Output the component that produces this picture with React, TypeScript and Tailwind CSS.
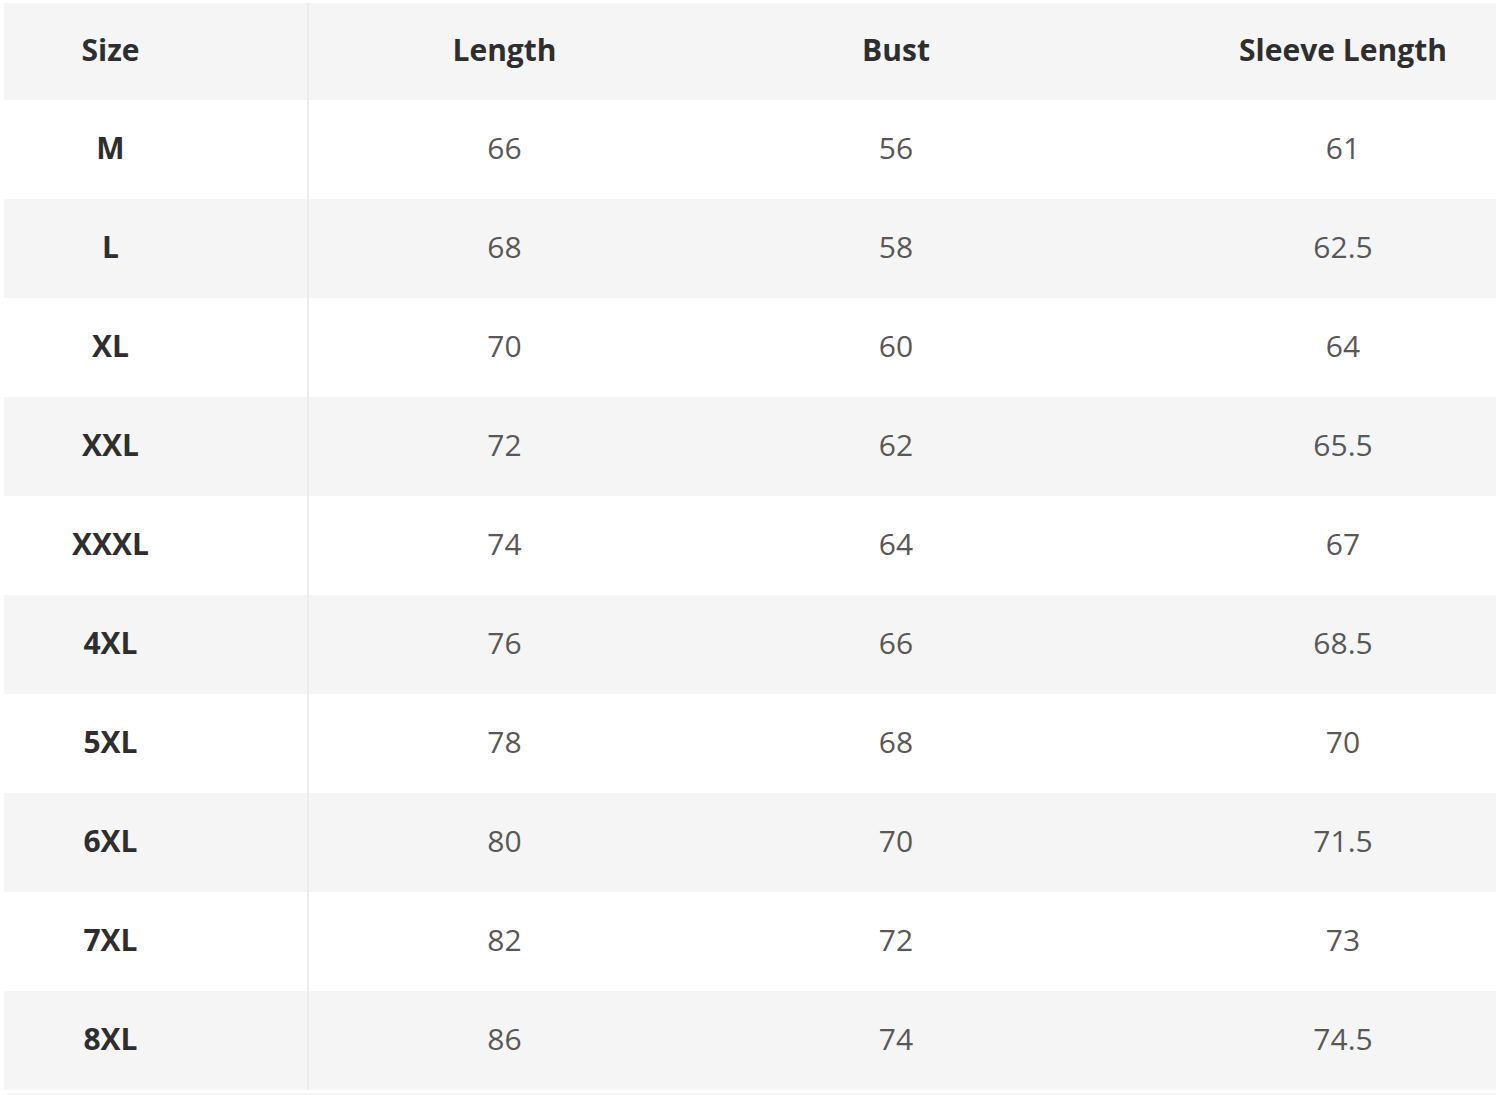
const rows = [
  ['M', '66', '56', '61'],
  ['L', '68', '58', '62.5'],
  ['XL', '70', '60', '64'],
  ['XXL', '72', '62', '65.5'],
  ['XXXL', '74', '64', '67'],
  ['4XL', '76', '66', '68.5'],
  ['5XL', '78', '68', '70'],
  ['6XL', '80', '70', '71.5'],
  ['7XL', '82', '72', '73'],
  ['8XL', '86', '74', '74.5'],
]

const headers = ['Size', 'Length', 'Bust', 'Sleeve Length']

function Row({ cells, head, gray }: { cells: string[]; head?: boolean; gray: boolean }) {
  const txt = head ? 'font-bold text-[#2e2e2e]' : 'text-[#585858]'
  return (
    <div
      className={`grid grid-cols-[305px_391px_392px_404px] ${head ? 'h-[97px]' : 'h-[99px]'} ${gray ? 'bg-[#f5f5f5]' : 'bg-white'}`}
    >
      <div className="flex items-center justify-center pb-[4px] pr-[90px] border-r-2 border-[#ececec] font-bold text-[#2e2e2e]">
        {cells[0]}
      </div>
      <div className={`flex items-center justify-center pb-[4px] ${txt}`}>{cells[1]}</div>
      <div className={`flex items-center justify-center pb-[4px] ${txt}`}>{cells[2]}</div>
      <div className={`flex items-center justify-center pb-[4px] pl-[98px] ${txt}`}>{cells[3]}</div>
    </div>
  )
}

export default function App() {
  return (
    <div className="w-[1500px] h-[1095px] bg-white overflow-hidden pt-[3px] pl-[4px] font-['Open_Sans',sans-serif] text-[30px]">
      <div className="w-[1492px]">
        <Row cells={headers} head gray />
        {rows.map((r, i) => (
          <Row key={r[0]} cells={r} gray={i % 2 === 1} />
        ))}
        <div className="mt-[3px] ml-[4px] h-[4px] bg-[#f5f5f5]" />
      </div>
    </div>
  )
}
